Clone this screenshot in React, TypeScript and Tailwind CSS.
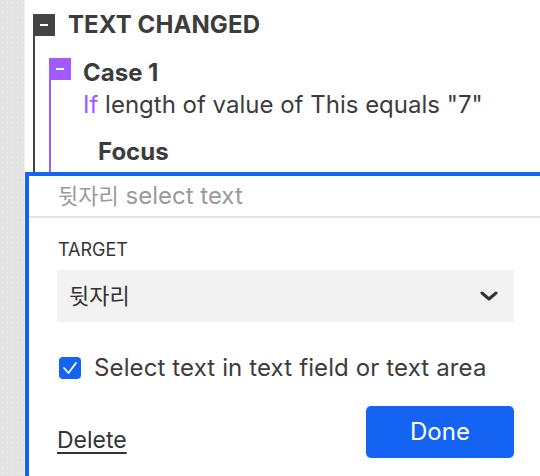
import React, { useState } from "react";

const BLUE = "#1463f2";

const ChevronDown = () => (
  <svg width="18" height="10" viewBox="0 0 18 10" fill="none">
    <path d="M2 2l7 6 7-6" stroke="#333" strokeWidth="3" strokeLinecap="round" strokeLinejoin="round" />
  </svg>
);

const Minus = () => <div className="w-[8px] h-[2px] bg-white" />;

export default function App() {
  const [checked, setChecked] = useState(true);

  return (
    <div
      className="flex w-[540px] h-[476px] overflow-hidden bg-white text-[#3c3c3c]"
      style={{ fontFamily: "Inter, 'Noto Sans CJK KR', sans-serif" }}
    >
      {/* left gutter */}
      <div className="w-[25px] shrink-0 bg-[#e3e3e3] bg-[radial-gradient(#f4f4f4_0.6px,transparent_0.8px)] bg-[length:5px_5px] border-r border-[#f0f0f0]" />

      <div className="flex-1 flex flex-col min-w-0">
        {/* workflow tree */}
        <div className="h-[172px] shrink-0 pl-2 pt-[14px] overflow-hidden">
          <div className="border-l-2 border-[#444] h-full">
            <div className="flex items-center gap-[13px] -ml-[2px]">
              <div className="w-[22px] h-[22px] bg-[#444] flex items-center justify-center">
                <Minus />
              </div>
              <div className="text-[24px] leading-[22px] font-bold tracking-[0.1px]">TEXT CHANGED</div>
            </div>

            <div className="ml-[14px] mt-[22px] border-l-2 border-[#a259ff] h-full">
              <div className="flex -ml-[2px]">
                <div className="w-[22px] h-[22px] bg-[#a259ff] flex items-center justify-center shrink-0">
                  <Minus />
                </div>
                <div className="ml-[12px] pt-px">
                  <div className="text-[24px] leading-[28px] font-bold">Case 1</div>
                  <div className="text-[24px] leading-[28px] mt-[4px] whitespace-nowrap">
                    <span className="text-[#a259ff]">If</span> length of value of This equals "7"
                  </div>
                  <div className="text-[24px] leading-[28px] font-bold ml-[15px] mt-[19px]">Focus</div>
                </div>
              </div>
            </div>
          </div>
        </div>

        {/* action panel */}
        <div className="flex-1 border-t-4 border-l-4 border-[#1463f2] flex flex-col">
          <div className="h-[42px] flex items-center pl-[29px] border-b-2 border-[#e4e4e4] text-[24px] text-[#9a9a9a] whitespace-nowrap">
            <span className="text-[22px]">뒷자리</span>&nbsp;select text
          </div>

          <div className="pl-[28px] pr-[26px] pt-[22px] flex flex-col">
            <div className="text-[18px] leading-[20px] text-[#333] pl-px">TARGET</div>
            <div className="mt-[10px] h-[52px] bg-[#f2f2f2] flex items-center justify-between pl-3 pr-[16px]">
              <span className="text-[22px] text-[#333]">뒷자리</span>
              <ChevronDown />
            </div>

            <label className="mt-[28px] flex items-center gap-[13px] pl-[2px] cursor-pointer">
              <button
                onClick={() => setChecked(!checked)}
                className="w-[22px] h-[22px] shrink-0 rounded-[4px] flex items-center justify-center"
                style={{ background: checked ? BLUE : "#fff" }}
              >
                {checked && (
                  <svg width="16" height="14" viewBox="0 0 16 14" fill="none">
                    <path d="M2 7l4.5 5L14 2" stroke="white" strokeWidth="1.8" strokeLinecap="round" strokeLinejoin="round" />
                  </svg>
                )}
              </button>
              <span className="text-[24px] tracking-[0.12px] whitespace-nowrap">Select text in text field or text area</span>
            </label>

            <div className="mt-[20px] flex items-start justify-between">
              <button className="mt-[20px] text-[23px] leading-[28px] underline underline-offset-[4px] text-[#333]">Delete</button>
              <button className="w-[148px] h-[52px] rounded-[5px] bg-[#1463f2] text-white text-[24px]">
                Done
              </button>
            </div>
          </div>
        </div>
      </div>
    </div>
  );
}
